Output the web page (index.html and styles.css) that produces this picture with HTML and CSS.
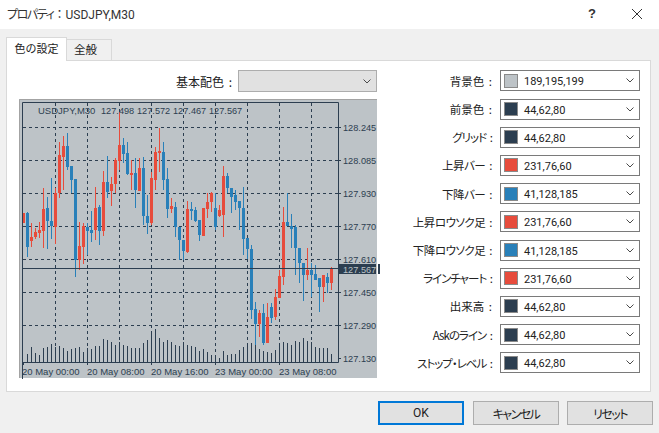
FILE: index.html
```html
<!DOCTYPE html>
<html lang="ja">
<head>
<meta charset="utf-8">
<title>プロパティ</title>
<link rel="stylesheet" href="styles.css">
</head>
<body>
<svg class="defs" width="0" height="0"><symbol id="chev" viewBox="0 0 8 5"><path d="M.5.5 4 4 7.500.5" fill="none" stroke="#4a4a4a"/></symbol></svg>
<div class="window">
  <header class="titlebar">
    <span class="title"><span class="title-jp">プロパティ</span><span class="title-colon">：</span>USDJPY,M30</span>
    <span class="help">?</span>
    <svg class="close" width="10" height="10" viewBox="0 0 10 10"><path d="M0 0 10 10M10 0 0 10" stroke="#333" fill="none"/></svg>
  </header>
  <main class="content">
    <div class="tabs">
      <div class="tab active">色の設定</div>
      <div class="tab">全般</div>
    </div>
    <section class="panel">
      <div class="left">
        <div class="scheme">
          <span class="scheme-label">基本配色 :</span>
          <div class="scheme-select"><svg class="chevron"><use href="#chev"/></svg></div>
        </div>
        <svg class="chart" width="362" height="280" viewBox="19 99 362 280">
          <rect x="19" y="99" width="358" height="279" fill="#bdc3c7"/>
          <path d="M19.500 378V99.500H377" fill="none" stroke="#a3a3a3"/>
          <path class="grid" d="M55.500 103V362M87.500 103V362M119.500 103V362M151.500 103V362M183.500 103V362M215.500 103V362M247.500 103V362M279.500 103V362M311.500 103V362M23 127.500H338M23 160.500H338M23 193.500H338M23 226.500H338M23 259.500H338M23 292.500H338M23 325.500H338"/>
          <path class="vol" d="M27.500 354V362M31.500 347V362M35.500 353V362M39.500 355V362M43.500 348V362M47.500 347V362M51.500 344V362M55.500 347V362M59.500 346V362M63.500 348V362M67.500 351V362M71.500 349V362M75.500 348V362M79.500 347V362M83.500 352V362M87.500 348V362M91.500 349V362M95.500 346V362M99.500 346V362M103.500 339V362M107.500 340V362M111.500 342V362M115.500 345V362M119.500 342V362M123.500 345V362M127.500 346V362M131.500 348V362M135.500 348V362M139.500 348V362M143.500 343V362M147.500 340V362M151.500 333V362M155.500 329V362M159.500 338V362M163.500 342V362M167.500 340V362M171.500 342V362M175.500 345V362M179.500 346V362M183.500 342V362M187.500 345V362M191.500 346V362M195.500 347V362M199.500 351V362M203.500 349V362M207.500 352V362M211.500 355V362M215.500 355V362M219.500 358V362M223.500 351V362M227.500 355V362M231.500 354V362M235.500 354V362M239.500 350V362M243.500 347V362M247.500 345V362M251.500 343V362M255.500 345V362M259.500 349V362M263.500 351V362M267.500 352V362M271.500 353V362M275.500 350V362M279.500 345V362M283.500 342V362M287.500 343V362M291.500 345V362M295.500 341V362M299.500 342V362M303.500 338V362M307.500 341V362M311.500 342V362M315.500 347V362M319.500 348V362M323.500 348V362M327.500 348V362M331.500 354V362"/>
          <path class="wick red" d="M31.500 223V247M35.500 228V239M39.500 222V238M43.500 188V248M55.500 188V244M59.500 142V198M63.500 136V190M79.500 222V270M83.500 223V264M95.500 187V240M103.500 171V236M111.500 177V206M115.500 158V193M119.500 112V170M131.500 160V190M139.500 158V191M151.500 172V225M155.500 147V190M159.500 128V172M171.500 198V213M187.500 201V253M207.500 193V218M211.500 192V212M219.500 205V217M223.500 166V237M259.500 310V337M267.500 303V343M275.500 289V320M279.500 270V298M283.500 207V285M307.500 248V280M323.500 275V302M331.500 267V290"/>
          <path class="wick blue" d="M27.500 212V257M47.500 197V249M51.500 178V239M67.500 133V170M71.500 166V193M75.500 179V277M87.500 223V255M91.500 211V242M99.500 205V245M107.500 156V198M123.500 138V163M127.500 142V175M135.500 158V208M143.500 157V225M147.500 195V234M163.500 142V190M167.500 168V218M175.500 202V237M179.500 227V260M183.500 240V260M191.500 202V220M195.500 207V222M199.500 220V241M215.500 193V230M227.500 173V193M231.500 188V213M235.500 190V210M239.500 201V230M243.500 187V255M247.500 238V259M251.500 245V319M255.500 302V345M263.500 304V345M271.500 303V323M287.500 193V226M291.500 214V248M295.500 225V275M299.500 248V283M303.500 263V301M311.500 263V297M315.500 265V280M319.500 278V312M327.500 273V293"/>
          <path class="body red" d="M23.500 213V223M31.500 237V241M35.500 232V237M39.500 230V233M43.500 209V231M55.500 193V227M59.500 155V193M63.500 146V157M79.500 246V260M83.500 226V247M95.500 208V230M103.500 182V231M111.500 184V191M115.500 160V184M119.500 145V161M131.500 173V175M139.500 168V191M151.500 178V223M155.500 152V180M159.500 151V153M171.500 206V209M187.500 209V252M203.500 208V236M207.500 202V209M211.500 193V202M219.500 210V216M223.500 176V215M259.500 313V324M267.500 317V343M275.500 297V317M279.500 276V298M283.500 222V277M307.500 270V275M323.500 275V287M331.500 268V283"/>
          <path class="body blue" d="M27.500 213V247M47.500 208V221M51.500 221V226M67.500 146V167M71.500 166V180M75.500 179V260M87.500 227V231M91.500 230V233M99.500 207V231M107.500 182V192M123.500 145V154M127.500 153V174M135.500 173V190M143.500 168V216M147.500 216V223M163.500 152V180M167.500 179V209M175.500 207V227M179.500 227V240M183.500 240V251M191.500 209V211M195.500 210V221M199.500 220V235M215.500 208V227M227.500 176V188M231.500 188V197M235.500 195V202M239.500 201V208M243.500 208V239M247.500 238V249M251.500 249V310M255.500 309V324M263.500 313V343M271.500 307V318M287.500 222V226M291.500 226V229M295.500 227V248M299.500 248V263M303.500 263V275M311.500 270V275M315.500 274V280M319.500 278V287M327.500 277V283"/>
          <path class="frame" d="M22.500 380V102.500H338.500V362.500H22M22 268.500H338"/>
          <path class="frame" d="M23.500 362V365M87.500 362V365M151.500 362V365M215.500 362V365M279.500 362V365M338 127.500H341M338 160.500H341M338 193.500H341M338 226.500H341M338 259.500H341M338 292.500H341M338 325.500H341M338 358.500H341"/>
          <rect class="tag" x="338" y="264" width="38" height="10"/>
          <rect class="tag" x="378" y="264" width="2" height="10"/>
          <text x="38" y="114" class="t w">USDJPY,M30</text>
          <text x="101" y="114" class="t">127.498</text>
          <text x="137" y="114" class="t">127.572</text>
          <text x="173" y="114" class="t">127.467</text>
          <text x="209" y="114" class="t">127.567</text>
          <text x="343" y="131" class="t">128.245</text>
          <text x="343" y="164" class="t">128.085</text>
          <text x="343" y="197" class="t">127.930</text>
          <text x="343" y="230" class="t">127.770</text>
          <text x="343" y="263" class="t">127.610</text>
          <text x="343" y="272.500" class="t light">127.567</text>
          <text x="343" y="296" class="t">127.450</text>
          <text x="343" y="329" class="t">127.290</text>
          <text x="343" y="362" class="t">127.130</text>
          <text x="22" y="375" class="t x">20 May 00:00</text>
          <text x="87" y="375" class="t x">20 May 08:00</text>
          <text x="151" y="375" class="t x">20 May 16:00</text>
          <text x="215" y="375" class="t x">23 May 00:00</text>
          <text x="279" y="375" class="t x">23 May 08:00</text>
        </svg>
      </div>
      <div class="colors">
        <span class="lbl">背景色 :</span><div class="pick"><i class="sw bg"></i><span>189,195,199</span><svg class="chevron"><use href="#chev"/></svg></div>
        <span class="lbl">前景色 :</span><div class="pick"><i class="sw dark"></i><span>44,62,80</span><svg class="chevron"><use href="#chev"/></svg></div>
        <span class="lbl kana">グリッド :</span><div class="pick"><i class="sw dark"></i><span>44,62,80</span><svg class="chevron"><use href="#chev"/></svg></div>
        <span class="lbl mix">上昇バー :</span><div class="pick"><i class="sw rd"></i><span>231,76,60</span><svg class="chevron"><use href="#chev"/></svg></div>
        <span class="lbl mix">下降バー :</span><div class="pick"><i class="sw bl"></i><span>41,128,185</span><svg class="chevron"><use href="#chev"/></svg></div>
        <span class="lbl mix">上昇ロウソク足 :</span><div class="pick"><i class="sw rd"></i><span>231,76,60</span><svg class="chevron"><use href="#chev"/></svg></div>
        <span class="lbl mix">下降ロウソク足 :</span><div class="pick"><i class="sw bl"></i><span>41,128,185</span><svg class="chevron"><use href="#chev"/></svg></div>
        <span class="lbl kana">ラインチャート :</span><div class="pick"><i class="sw rd"></i><span>231,76,60</span><svg class="chevron"><use href="#chev"/></svg></div>
        <span class="lbl">出来高 :</span><div class="pick"><i class="sw dark"></i><span>44,62,80</span><svg class="chevron"><use href="#chev"/></svg></div>
        <span class="lbl kana">Askのライン :</span><div class="pick"><i class="sw dark"></i><span>44,62,80</span><svg class="chevron"><use href="#chev"/></svg></div>
        <span class="lbl kana">ストップ・レベル :</span><div class="pick"><i class="sw dark"></i><span>44,62,80</span><svg class="chevron"><use href="#chev"/></svg></div>
      </div>
    </section>
    <footer class="buttons">
      <button class="btn primary">OK</button>
      <button class="btn">キャンセル</button>
      <button class="btn">リセット</button>
    </footer>
  </main>
</div>
</body>
</html>
```
FILE: styles.css
```css
* { box-sizing: border-box; }
html, body { margin: 0; padding: 0; }
body { font-family: "Noto Sans CJK JP", "Liberation Sans", sans-serif; font-feature-settings: "palt"; color: #222; background: #f0f0f0; overflow: hidden; }
.defs { position: absolute; }
.window { width: 659px; height: 433px; display: flex; flex-direction: column; }
.titlebar { height: 29px; background: #fff; display: flex; align-items: center; font-size: 12px; padding: 0 17px 2px 7px; color: #333; }
.title { flex: 1; font-family: Roboto, "Noto Sans CJK JP", sans-serif; }
.title-jp { letter-spacing: -1.400px; }
.title-colon { font-feature-settings: normal; }
.help { font-weight: 700; font-family: "Liberation Sans", sans-serif; margin-right: 36px; font-size: 13px; }
.content { flex: 1; display: flex; flex-direction: column; background: #f0f0f0; padding: 8px 8px 0 6px; }
.tabs { display: flex; align-items: flex-end; height: 23px; position: relative; z-index: 1; }
.tab { width: 45px; height: 21px; background: #f0f0f0; border: 1px solid #d9d9d9; border-left: 0; border-bottom: 0; font-size: 11.500px; line-height: 18px; text-align: center; padding-right: 7px; font-feature-settings: normal; }
.tab.active { width: 61px; height: 24px; margin-bottom: -1px; padding-right: 0; background: #fff; border-left: 1px solid #d9d9d9; line-height: 20px; font-size: 11px; }
.panel { height: 332px; background: #fff; border: 1px solid #d9d9d9; display: flex; justify-content: space-between; padding: 9px 10px 0 12px; }
.left { width: 362px; }
.scheme { display: flex; justify-content: flex-end; align-items: center; height: 22px; gap: 6px; padding-right: 4px; font-size: 12px; word-spacing: 2px; }
.scheme-select { width: 139px; height: 22px; background: #e1e1e1; border: 1px solid #adadad; display: flex; align-items: center; justify-content: flex-end; padding-right: 5px; }
.chart { display: block; margin-top: 7px; }
.grid { fill: none; stroke: #2c3e50; stroke-dasharray: 3 3; }
.vol { fill: none; stroke: #2c3e50; }
.frame { fill: none; stroke: #2c3e50; }
.wick, .body { fill: none; }
.wick { stroke-width: 1; }
.body { stroke-width: 3; }
.red { stroke: #e74c3c; }
.blue { stroke: #2980b9; }
.tag { fill: #2c3e50; }
.t { font-family: "Liberation Sans", sans-serif; font-size: 9.200px; fill: #2c3e50; }
.t.light { fill: #bdc3c7; }
.t.x { font-size: 9.500px; }
.t.w { font-size: 9.500px; }
.colors { display: grid; grid-template-columns: auto 140px; column-gap: 8px; row-gap: 7.200px; grid-auto-rows: 21px; align-items: center; padding-top: .4px; }
.lbl { font-size: 11.500px; text-align: right; white-space: nowrap; word-spacing: 2px; }
.lbl.kana { letter-spacing: -1px; }
.lbl.mix { letter-spacing: -.5px; }
.pick { height: 21px; border: 1px solid #7a7a7a; background: #fff; display: flex; align-items: center; padding: 0 5px 0 3px; font: 11px Roboto, sans-serif; color: #222; }
.pick span { flex: 1; margin-left: 6px; padding-top: 2px; }
.sw { width: 14px; height: 14px; border: 1px solid #8a8a8a; display: block; }
.sw.bg { background: #bdc3c7; }
.sw.dark { background: #2c3e50; }
.sw.rd { background: #e74c3c; }
.sw.bl { background: #2980b9; }
.chevron { width: 8px; height: 5px; display: block; }
.buttons { display: flex; justify-content: flex-end; gap: 8px; margin-top: 9px; margin-right: -2px; }
.btn { width: 86px; height: 24px; background: #e1e1e1; border: 1px solid #adadad; font: 12px "Noto Sans CJK JP", sans-serif; font-feature-settings: "palt"; letter-spacing: -1.500px; color: #222; padding: 0; }
.btn.primary { border: 2px solid #0078d7; font-family: Roboto, sans-serif; letter-spacing: 0; margin-right: 1px; }
```
